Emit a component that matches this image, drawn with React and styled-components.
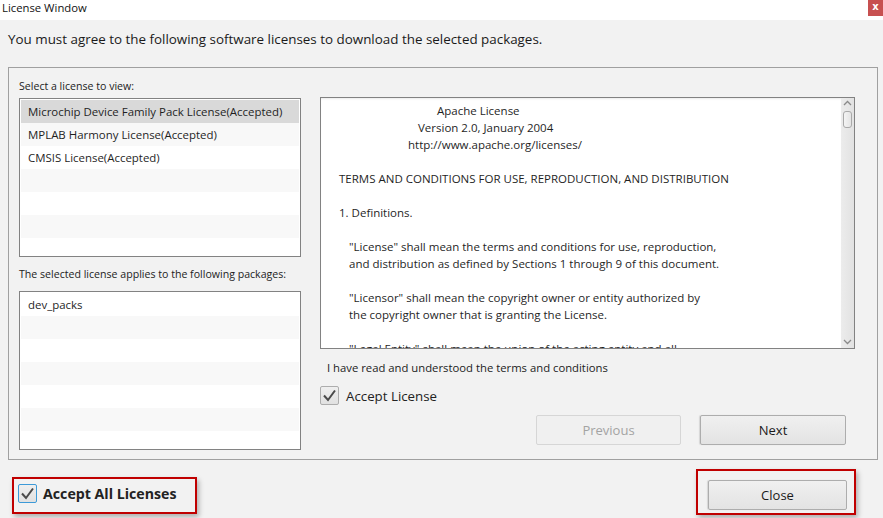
import React from "react";
import styled, { createGlobalStyle } from "styled-components";

const GlobalStyle = createGlobalStyle`
  html, body { margin: 0; padding: 0; background: #f2f2f2; }
  * { box-sizing: border-box; }
`;

const FONT = `"Open Sans", "Noto Sans", "Liberation Sans", sans-serif`;

const Window = styled.div`
  width: 883px;
  height: 518px;
  display: flex;
  flex-direction: column;
  background: #f2f2f2;
  font-family: ${FONT};
  color: #1f1f1f;
  overflow: hidden;
`;

const TitleBar = styled.div`
  height: 20px;
  background: #ffffff;
  display: flex;
  justify-content: space-between;
  align-items: flex-start;
`;

const Title = styled.div`
  padding-left: 2px;
  font-size: 11.3px;
  line-height: 15px;
  color: #111;
`;

const CloseX = styled.div`
  width: 15px;
  height: 16px;
  background: #c75050;
  color: #fff;
  font-family: "DejaVu Sans", sans-serif;
  font-weight: bold;
  font-size: 10px;
  line-height: 14px;
  text-align: center;
`;

const Heading = styled.div`
  height: 47px;
  padding: 10px 8px 0;
  font-size: 13.4px;
  line-height: 18px;
  color: #1a1a1a;
`;

const Panel = styled.div`
  margin-left: 8px;
  width: 870px;
  height: 393px;
  border: 1px solid #a0a0a0;
  display: flex;
`;

const LeftColumn = styled.div`
  width: 292px;
  padding: 11px 0 0 10px;
  display: flex;
  flex-direction: column;
`;

const Label = styled.div`
  font-size: 10.6px;
  line-height: 14px;
  height: 14px;
  margin-top: ${(p) => p.$mt || 0}px;
  color: #222;
  white-space: nowrap;
`;

const ListBox = styled.div`
  margin-top: ${(p) => p.$mt}px;
  width: 282px;
  height: 159px;
  border: 1px solid #828282;
  background: #fff;
  padding: 1px;
  overflow: hidden;
`;

const Row = styled.div`
  height: 23px;
  padding-left: 7px;
  font-size: 11.45px;
  line-height: 23px;
  white-space: nowrap;
  color: #1f1f1f;
  background: ${(p) => (p.$selected ? "#d9d9d9" : p.$alt ? "#f8f8f8" : "#ffffff")};
`;

const RightColumn = styled.div`
  flex: 1;
  padding: 29px 0 0 19px;
  display: flex;
  flex-direction: column;
`;

const TextArea = styled.div`
  width: 535px;
  height: 252px;
  border: 1px solid #828282;
  background: #fff;
  display: flex;
  overflow: hidden;
`;

const TextContent = styled.div`
  flex: 1;
  padding-top: 4px;
  overflow: hidden;
  box-shadow: inset 0 2px 2px -1px rgba(0, 0, 0, 0.08);
`;

const Line = styled.div`
  height: 17px;
  line-height: 17px;
  font-size: 11.5px;
  padding-left: ${(p) => p.$indent || 0}px;
  white-space: pre;
  color: #1f1f1f;
`;

const ScrollBar = styled.div`
  width: 13px;
  background: linear-gradient(to right, #ececec, #e2e2e2);
  display: flex;
  flex-direction: column;
  align-items: center;
  padding-top: 2px;
`;

const ScrollArrow = styled.svg`
  width: 9px;
  height: 6px;
  flex: none;
  margin-bottom: ${(p) => p.$mb || 0}px;
`;

const Thumb = styled.div`
  margin-top: 5px;
  width: 9px;
  height: 17px;
  border: 1px solid #a9a9a9;
  border-radius: 3px;
  background: linear-gradient(to right, #f4f4f4, #e4e4e4);
`;

const Spacer = styled.div`
  flex: 1;
`;

const Note = styled.div`
  margin-top: 12px;
  padding-left: 7px;
  font-size: 11.3px;
  line-height: 14px;
  color: #222;
  white-space: nowrap;
`;

const CheckRow = styled.label`
  margin-top: ${(p) => p.$mt || 0}px;
  display: flex;
  align-items: center;
  gap: ${(p) => p.$gap || 7}px;
  font-size: ${(p) => (p.$bold ? 14.2 : 13.3)}px;
  font-weight: ${(p) => (p.$bold ? 700 : 400)};
  color: #222;
  height: 19px;
  white-space: nowrap;
`;

const Box = styled.span`
  width: 19px;
  height: 19px;
  flex: none;
  border: 1px solid ${(p) => (p.$focused ? "#3d9ad8" : "#adadad")};
  border-radius: 2px;
  background: linear-gradient(#efefef, #e1e1e1);
  display: flex;
  align-items: center;
  justify-content: center;
`;

const ButtonRow = styled.div`
  margin-top: 10px;
  padding-left: 216px;
  display: flex;
  gap: 19px;
`;

const Button = styled.div`
  width: ${(p) => p.$w || 145}px;
  height: 30px;
  border: 1px solid ${(p) => (p.$disabled ? "#d6d6d6" : "#adadad")};
  border-radius: 2px;
  background: ${(p) => (p.$disabled ? "#f0f0f0" : "linear-gradient(#f0f0f0, #e3e3e3)")};
  color: ${(p) => (p.$disabled ? "#a3a3a3" : "#1a1a1a")};
  font-size: 13px;
  display: flex;
  align-items: center;
  justify-content: center;
  box-shadow: ${(p) => (p.$disabled ? "none" : "-1px 0 1px rgba(0,0,0,0.12)")};
`;

const Footer = styled.div`
  flex: 1;
  display: flex;
  justify-content: space-between;
  align-items: flex-start;
  padding: 0 27px 0 12px;
`;

const Highlight = styled.div`
  margin-top: ${(p) => p.$mt}px;
  width: ${(p) => p.$w}px;
  height: ${(p) => p.$h}px;
  border: 2px solid #c00000;
  padding: ${(p) => p.$pad};
  box-shadow: 2px 3px 5px rgba(0, 0, 0, 0.28);
`;

const Check = () => (
  <svg width="15" height="13" viewBox="0 0 15 13">
    <path d="M2 6.5 L6 11 L13 1.5" fill="none" stroke="#4a4a4a" strokeWidth="2" />
  </svg>
);

const licenses = [
  "Microchip Device Family Pack License(Accepted)",
  "MPLAB Harmony License(Accepted)",
  "CMSIS License(Accepted)",
  "",
  "",
  "",
  "",
];

const packages = ["dev_packs", "", "", "", "", "", ""];

const licenseLines = [
  [116, "Apache License"],
  [97, "Version 2.0, January 2004"],
  [87, "http://www.apache.org/licenses/"],
  [0, ""],
  [18, "TERMS AND CONDITIONS FOR USE, REPRODUCTION, AND DISTRIBUTION"],
  [0, ""],
  [18, "1. Definitions."],
  [0, ""],
  [28, "\"License\" shall mean the terms and conditions for use, reproduction,"],
  [28, "and distribution as defined by Sections 1 through 9 of this document."],
  [0, ""],
  [28, "\"Licensor\" shall mean the copyright owner or entity authorized by"],
  [28, "the copyright owner that is granting the License."],
  [0, ""],
  [28, "\"Legal Entity\" shall mean the union of the acting entity and all"],
];

export default function App() {
  return (
    <>
      <GlobalStyle />
      <Window>
        <TitleBar>
          <Title>License Window</Title>
          <CloseX>x</CloseX>
        </TitleBar>
        <Heading>You must agree to the following software licenses to download the selected packages.</Heading>
        <Panel>
          <LeftColumn>
            <Label>Select a license to view:</Label>
            <ListBox $mt={5}>
              {licenses.map((l, i) => (
                <Row key={i} $selected={i === 0} $alt={i % 2 === 1}>
                  {l}
                </Row>
              ))}
            </ListBox>
            <Label $mt={10}>The selected license applies to the following packages:</Label>
            <ListBox $mt={10}>
              {packages.map((l, i) => (
                <Row key={i} $alt={i % 2 === 1}>
                  {l}
                </Row>
              ))}
            </ListBox>
          </LeftColumn>
          <RightColumn>
            <TextArea>
              <TextContent>
                {licenseLines.map(([ind, t], i) => (
                  <Line key={i} $indent={ind}>
                    {t}
                  </Line>
                ))}
              </TextContent>
              <ScrollBar>
                <ScrollArrow viewBox="0 0 9 6">
                  <path d="M1 5 L4.5 1.5 L8 5" fill="none" stroke="#8a8a8a" strokeWidth="1.3" />
                </ScrollArrow>
                <Thumb />
                <Spacer />
                <ScrollArrow viewBox="0 0 9 6" $mb={3}>
                  <path d="M1 1 L4.5 4.5 L8 1" fill="none" stroke="#8a8a8a" strokeWidth="1.3" />
                </ScrollArrow>
              </ScrollBar>
            </TextArea>
            <Note>I have read and understood the terms and conditions</Note>
            <CheckRow $mt={11}>
              <Box>
                <Check />
              </Box>
              Accept License
            </CheckRow>
            <ButtonRow>
              <Button $disabled>Previous</Button>
              <Button $w={146}>Next</Button>
            </ButtonRow>
          </RightColumn>
        </Panel>
        <Footer>
          <Highlight $mt={17} $w={185} $h={37} $pad="5px 0 0 4px">
            <CheckRow $gap={6} $bold>
              <Box $focused>
                <Check />
              </Box>
              Accept All Licenses
            </CheckRow>
          </Highlight>
          <Highlight $mt={9} $w={160} $h={46} $pad="9px 0 0 10px">
            <Button $w={139}>Close</Button>
          </Highlight>
        </Footer>
      </Window>
    </>
  );
}
